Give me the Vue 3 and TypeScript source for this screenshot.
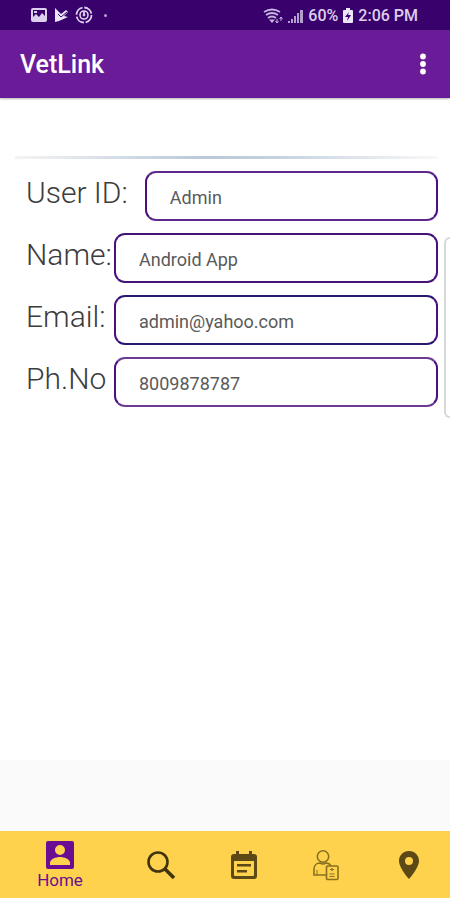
<script setup lang="ts">
import { ref } from 'vue'

interface Field {
  id: string
  label: string
  type: string
  value: string
  tone: string
}

const fields = ref<Field[]>([
  { id: 'user-id', label: 'User ID:', type: 'text', value: 'Admin', tone: 'violet' },
  { id: 'name', label: 'Name:', type: 'text', value: 'Android App', tone: 'deep' },
  { id: 'email', label: 'Email:', type: 'email', value: 'admin@yahoo.com', tone: 'indigo' },
  { id: 'phone', label: 'Ph.No', type: 'tel', value: '8009878787', tone: 'soft' },
])
</script>

<template>
  <div class="screen">
    <div class="status">
      <div class="group notices">
        <svg width="16" height="16" viewBox="0 0 16 16">
          <path fill="#ddd0ee" fill-rule="evenodd" d="M2 1h12a2 2 0 0 1 2 2v10a2 2 0 0 1-2 2H2a2 2 0 0 1-2-2V3a2 2 0 0 1 2-2Zm0 2v7l3-3 3 3 3-4 3 3V3Zm1 1h3v2H3Z" />
        </svg>
        <svg width="14" height="16" viewBox="0 0 14 16">
          <path fill="#ece4f7" d="M1 1l4 4 2 2 5-4 2 2-4 4 4 1-9 4-4 1Z" />
          <path d="M4 7l3 3 6-5" fill="none" stroke="#38016b" stroke-width="1" />
        </svg>
        <svg width="18" height="18" viewBox="0 0 18 18" fill="none" stroke="#ddd0ee">
          <circle cx="9" cy="9" r="7.5" stroke-width="1.8" stroke-dasharray="10 1.8" />
          <circle cx="9" cy="9" r="4" stroke-width="1.6" />
          <path d="M9 5v4" stroke-width="1.8" />
          <circle cx="9" cy="9" r="1" fill="#ddd0ee" />
        </svg>
        <span class="dot"></span>
      </div>
      <div class="group system">
        <svg width="20" height="16" viewBox="0 0 20 16" fill="none" stroke="#c9b6df" stroke-width="1.8">
          <path d="M1 4Q9-1 17 4M3 7Q9 3 15 7M5 10Q9 7 13 10" />
          <path d="M6 11.500h6L9 15Z" fill="#c9b6df" stroke="none" />
          <path d="M14 11v4M12.500 13l1.500 2 1.500-2M18 13v-4M16.500 11l1.500-2 1.500 2" stroke-width="1" />
        </svg>
        <svg width="17" height="16" viewBox="0 0 17 16" fill="#b39fcd">
          <path d="M1 13h2v2H1ZM4 11h2v4H4ZM7 8h2v7H7ZM10 5h2v10h-2ZM13 2h3v13h-3Z" />
        </svg>
        <span>60%</span>
        <svg width="12" height="16" viewBox="0 0 12 16">
          <path fill="#ece4f7" d="M4 0h4v2h2a1 1 0 0 1 1 1v11a1 1 0 0 1-1 1H2a1 1 0 0 1-1-1V3a1 1 0 0 1 1-1h2Z" />
          <path fill="#38016b" d="M7 4 3 9h3l-1 4 4-6H6Z" />
        </svg>
        <span>2:06 PM</span>
      </div>
    </div>

    <header class="appbar">
      <h1>VetLink</h1>
      <button type="button" class="more" aria-label="More options">
        <svg width="8" height="24" viewBox="0 0 8 24" fill="#fff">
          <circle cx="4" cy="4.500" r="2.900" />
          <circle cx="4" cy="12" r="2.900" />
          <circle cx="4" cy="19.500" r="2.900" />
        </svg>
      </button>
    </header>

    <main class="content">
      <div class="rule"></div>
      <form class="profile" @submit.prevent>
        <div v-for="f in fields" :key="f.id" class="row" :class="f.id">
          <label :for="f.id">{{ f.label }}</label>
          <input :id="f.id" v-model="f.value" :type="f.type" :class="f.tone" />
        </div>
      </form>
      <div class="edge-handle"></div>
    </main>

    <nav class="tabs">
      <a href="#home" class="tab active">
        <svg width="30" height="30" viewBox="0 0 30 30">
          <path fill="#6a0d93" fill-rule="evenodd" d="M3 1h24a2 2 0 0 1 2 2v24a2 2 0 0 1-2 2H3a2 2 0 0 1-2-2V3a2 2 0 0 1 2-2Zm12 4a5 5 0 1 0 0 10 5 5 0 0 0 0-10ZM5 25h20v-2c0-4-6-6-10-6S5 19 5 23Z" />
        </svg>
        <span>Home</span>
      </a>
      <a href="#search" class="tab" aria-label="Search">
        <svg width="30" height="30" viewBox="0 0 30 30" fill="none" stroke="#41330d">
          <circle cx="12" cy="12" r="9.500" stroke-width="2.600" />
          <path d="M18.500 18.500 28 28" stroke-width="3.600" />
        </svg>
      </a>
      <a href="#schedule" class="tab" aria-label="Schedule">
        <svg width="28" height="30" viewBox="0 0 28 30">
          <path fill="#5c4915" fill-rule="evenodd" d="M6 1h3v3h10V1h3v3h2a3 3 0 0 1 3 3v19a3 3 0 0 1-3 3H4a3 3 0 0 1-3-3V7a3 3 0 0 1 3-3h2ZM4 11v14a1 1 0 0 0 1 1h18a1 1 0 0 0 1-1V11ZM7 14h14v2.500H7ZM7 20h10v2.500H7Z" />
        </svg>
      </a>
      <a href="#records" class="tab" aria-label="Records">
        <svg width="28" height="32" viewBox="0 0 28 32" fill="none" stroke="#88701f" stroke-width="1.600">
          <circle cx="11" cy="7.500" r="5.700" />
          <path d="M14 26H2v-6c0-4 3-6 6-6q3 2 6 0c2 0 4 1 5 3" />
          <path d="M5 21v5" stroke-width="1" />
          <rect x="14.500" y="17" width="11.500" height="13.500" rx="1" />
          <path d="M20 19v3M18 20.500h4M17.500 25h5M17.500 27.500h5" stroke-width="1.200" />
        </svg>
      </a>
      <a href="#places" class="tab" aria-label="Places">
        <svg width="22" height="30" viewBox="0 0 22 30">
          <path fill="#5c4915" fill-rule="evenodd" d="M11 1C5 1 1 5.500 1 11c0 7 10 18 10 18s10-11 10-18C21 5.500 17 1 11 1Zm0 6a4 4 0 1 1 0 8 4 4 0 0 1 0-8Z" />
        </svg>
      </a>
    </nav>
  </div>
</template>

<style>
body {
  margin: 0;
  background: #fff;
}
</style>

<style scoped>
* {
  box-sizing: border-box;
}

.screen {
  display: flex;
  flex-direction: column;
  min-height: 100vh;
  padding-bottom: 2px;
  overflow: hidden;
  font-family: Roboto, "Liberation Sans", sans-serif;
  background: #fff;
}

.status {
  display: flex;
  justify-content: space-between;
  align-items: center;
  height: 30px;
  padding: 0 32px 0 31px;
  background: #38016b;
  color: #ddd0ee;
  font-size: 16px;
  font-weight: 500;
  line-height: 20px;
}

.group {
  display: flex;
  align-items: center;
}

.notices {
  gap: 7px;
}

.system {
  gap: 4px;
  padding-top: 2px;
}

.dot {
  width: 3px;
  height: 3px;
  margin-left: 4px;
  border-radius: 50%;
  background: #b39fcd;
}

.appbar {
  display: flex;
  justify-content: space-between;
  align-items: center;
  height: 68px;
  padding: 0 19px 0 20px;
  background: #6a1b97;
  box-shadow: 0 1px 2px rgba(0, 0, 0, 0.3);
}

h1 {
  margin: 0;
  padding-top: 2px;
  color: #fff;
  font-size: 25px;
  font-weight: 500;
  line-height: 28px;
}

.more {
  display: flex;
  padding: 0 4px;
  border: 0;
  background: none;
}

.content {
  position: relative;
  flex: 1;
  padding: 58px 12px 0 15px;
  border-bottom: 71px solid #fafafa;
}

.rule {
  height: 3px;
  background: linear-gradient(90deg, #f4f4f4, #b9c8da 45%, #c3d0de 60%, #f8f8f8);
}

.profile {
  display: flex;
  flex-direction: column;
  gap: 12px;
  padding: 12px 0 0 11px;
}

.row {
  display: flex;
  align-items: flex-start;
}

label {
  flex: none;
  min-width: 88px;
  padding-top: 4px;
  color: #3c3c3c;
  font-size: 30px;
  font-weight: 300;
  line-height: 36px;
}

.user-id label {
  padding-right: 17px;
}

input {
  flex: 1;
  min-width: 0;
  height: 50px;
  padding: 2px 23px 0;
  border: 2px solid #4b1a80;
  border-radius: 11px;
  outline: 0;
  background: #fff;
  color: #5a5a5a;
  font-family: inherit;
  font-size: 18px;
}

.violet {
  border-color: #5b2a8c #4b0f80;
}

.deep {
  border-color: #431377 #4b0f80;
}

.indigo {
  border-color: #2b1670 #4b0f80;
}

.soft {
  border-color: #6c3c94 #4b0f80;
}

.edge-handle {
  position: absolute;
  top: 139px;
  right: 0;
  width: 6px;
  height: 181px;
  border: 2px solid #d8d8d8;
  border-right: 0;
  border-radius: 6px 0 0 6px;
}

.tabs {
  display: flex;
  height: 67px;
  background: #ffd24d;
}

.tab {
  display: flex;
  flex: 11 1 0;
  flex-direction: column;
  align-items: center;
  justify-content: center;
  color: #5c4915;
  text-decoration: none;
}

.active {
  flex-grow: 16;
  color: #6a0d93;
  font-size: 17px;
  line-height: 20px;
}
</style>
